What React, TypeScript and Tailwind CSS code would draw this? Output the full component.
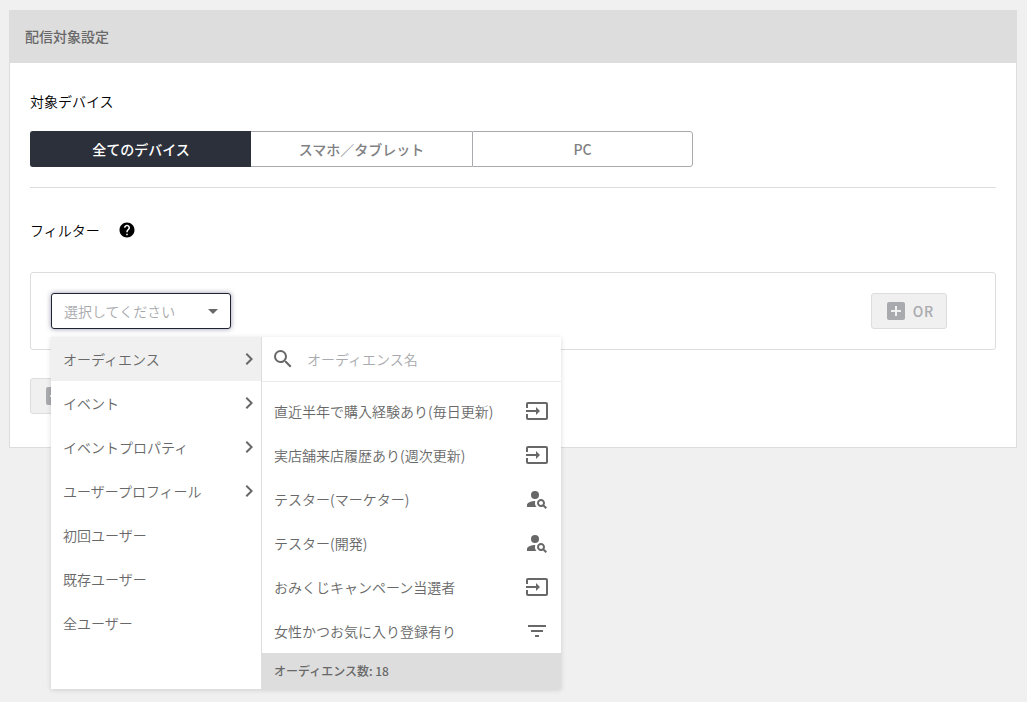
import { useState } from "react";
import type { IconType } from "react-icons";
import {
  MdAddBox,
  MdArrowDropDown,
  MdChevronRight,
  MdFilterList,
  MdHelp,
  MdInput,
  MdPersonSearch,
  MdSearch,
} from "react-icons/md";

const devices = ["全てのデバイス", "スマホ／タブレット", "PC"];

const categories = [
  { label: "オーディエンス", hasChildren: true },
  { label: "イベント", hasChildren: true },
  { label: "イベントプロパティ", hasChildren: true },
  { label: "ユーザープロフィール", hasChildren: true },
  { label: "初回ユーザー", hasChildren: false },
  { label: "既存ユーザー", hasChildren: false },
  { label: "全ユーザー", hasChildren: false },
];

const audiences: { name: string; icon: IconType }[] = [
  { name: "直近半年で購入経験あり(毎日更新)", icon: MdInput },
  { name: "実店舗来店履歴あり(週次更新)", icon: MdInput },
  { name: "テスター(マーケター)", icon: MdPersonSearch },
  { name: "テスター(開発)", icon: MdPersonSearch },
  { name: "おみくじキャンペーン当選者", icon: MdInput },
  { name: "女性かつお気に入り登録有り", icon: MdFilterList },
];

function DeviceTabs() {
  const [device, setDevice] = useState(devices[0]);

  return (
    <div role="group" aria-labelledby="device-label" className="mt-5 grid max-w-[663px] grid-cols-3">
      {devices.map((name) => (
        <button
          key={name}
          type="button"
          aria-pressed={device === name}
          onClick={() => setDevice(name)}
          className={`h-9 border-y font-medium first:rounded-l-[3px] first:border-l last:rounded-r-[3px] last:border-x ${
            device === name
              ? "border-[#2c303b] bg-[#2c303b] text-white"
              : "border-[#a9aaae] bg-white text-[#808184]"
          }`}
        >
          {name}
        </button>
      ))}
    </div>
  );
}

function FilterMenu() {
  const [active, setActive] = useState("オーディエンス");

  return (
    <div className="absolute top-full left-0 z-10 mt-2 flex w-[510px] bg-white shadow-[0_1px_5px_rgba(0,0,0,0.15)]">
      <ul className="w-[211px] border-r border-[#ddd]">
        {categories.map(({ label, hasChildren }) => (
          <li key={label}>
            <button
              type="button"
              onClick={() => setActive(label)}
              className={`flex h-11 w-full items-center justify-between pl-3 ${
                active === label ? "bg-[#f0f0f0]" : ""
              }`}
            >
              {label}
              {hasChildren && <MdChevronRight size={24} />}
            </button>
          </li>
        ))}
      </ul>

      <div className="flex flex-1 flex-col">
        <label className="flex h-[45px] items-center gap-3 border-b border-[#ececec] px-[9px]">
          <MdSearch size={24} />
          <input
            type="text"
            aria-label="オーディエンス名"
            placeholder="オーディエンス名"
            className="min-w-0 flex-1 outline-none placeholder:text-[#a9aaae]"
          />
        </label>
        <ul className="pt-[7px]">
          {audiences.map(({ name, icon: Icon }) => (
            <li key={name}>
              <button type="button" className="flex h-11 w-full items-center justify-between px-3">
                {name}
                <Icon size={24} />
              </button>
            </li>
          ))}
        </ul>
        <p className="flex h-9 items-center bg-[#ddd] px-3 text-xs font-medium">オーディエンス数: 18</p>
      </div>
    </div>
  );
}

export default function App() {
  return (
    <main className="min-h-screen bg-[#f0f0f0] pt-2.5 pr-2.5 pl-[9px] font-['Noto_Sans_CJK_JP',sans-serif] text-sm font-[350] text-[#686868]">
      <section className="border border-[#ddd] bg-white">
        <h1 className="flex h-[52px] items-center bg-[#ddd] px-[15px] pb-0.5 font-medium">配信対象設定</h1>

        <div className="px-5 pt-7 pb-[33px]">
          <h2 id="device-label" className="font-[350] text-black">
            対象デバイス
          </h2>
          <DeviceTabs />

          <hr className="mt-5 border-[#ddd]" />

          <div className="mt-8 flex items-center gap-[18px] text-black">
            <h2 className="font-[350]">フィルター</h2>
            <button type="button" aria-label="ヘルプ">
              <MdHelp size={18} />
            </button>
          </div>

          <div className="mt-8 flex items-center justify-between rounded-[3px] border border-[#ddd] py-5 pr-12 pl-5">
            <div className="relative">
              <select
                aria-label="フィルター"
                className="block h-9 w-[180px] appearance-none rounded-[3px] border border-[#1f2230] bg-white px-3 text-[#a9aaae] shadow-[0_0_5px_rgba(44,48,90,0.5)] outline-none"
              >
                <option>選択してください</option>
              </select>
              <MdArrowDropDown size={24} className="pointer-events-none absolute top-1.5 right-1.5" />
              <FilterMenu />
            </div>
            <button
              type="button"
              className="flex h-9 items-center gap-[5px] rounded-[3px] border border-[#ddd] bg-[#f0f0f0] px-3 font-medium tracking-wider text-[#a9aaae]"
            >
              <MdAddBox size={24} />
              OR
            </button>
          </div>

          <button
            type="button"
            aria-label="条件を追加"
            className="mt-7 flex h-9 items-center rounded-[3px] border border-[#ddd] bg-[#f0f0f0] px-3 text-[#a9aaae]"
          >
            <MdAddBox size={24} />
          </button>
        </div>
      </section>
    </main>
  );
}
